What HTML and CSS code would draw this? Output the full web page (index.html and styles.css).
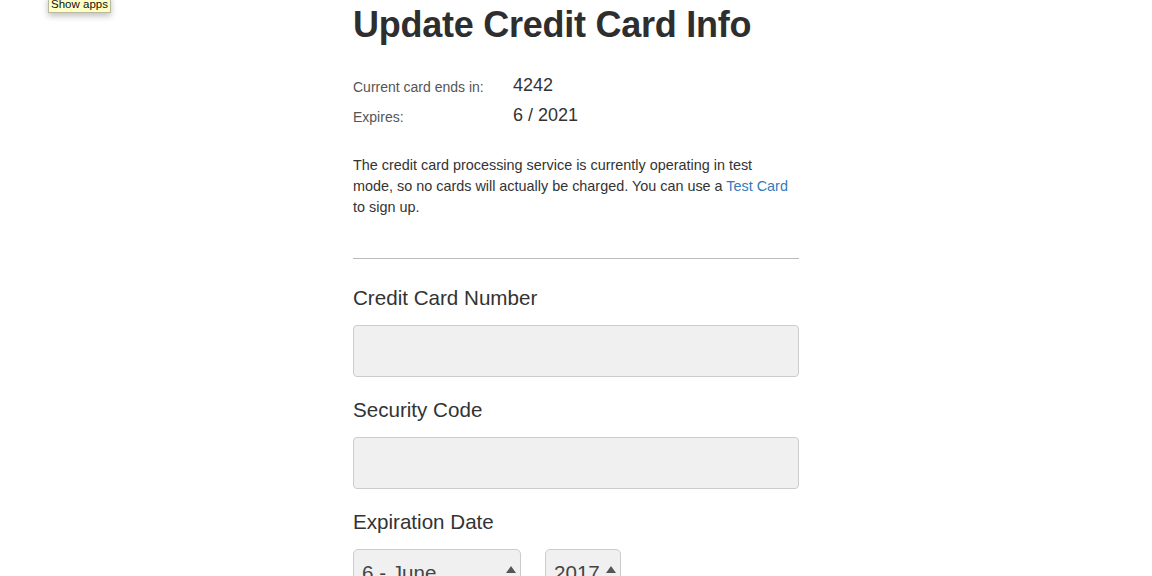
FILE: index.html
```html
<!DOCTYPE html>
<html>
<head>
<meta charset="utf-8">
<link rel="stylesheet" href="styles.css">
</head>
<body>
<div class="tooltip">Show apps</div>
<main class="container">
  <h1 class="title">Update Credit Card Info</h1>
  <div class="card-info">
    <div class="info-label">Current card ends in:</div>
    <div class="info-value">4242</div>
    <div class="info-label">Expires:</div>
    <div class="info-value">6 / 2021</div>
  </div>
  <p class="notice">The credit card processing service is currently operating in test mode, so no cards will actually be charged. You can use a <a href="#" class="link">Test Card</a> to sign up.</p>
  <hr class="divider">
  <form class="form">
    <div class="field">
      <label class="field-label">Credit Card Number</label>
      <input class="input" type="text">
    </div>
    <div class="field">
      <label class="field-label">Security Code</label>
      <input class="input" type="text">
    </div>
    <div class="field">
      <label class="field-label">Expiration Date</label>
      <div class="selects">
        <div class="select select-month"><span class="select-text">6 - June</span><span class="arrows"><span class="up"></span><span class="down"></span></span></div>
        <div class="select select-year"><span class="select-text">2017</span><span class="arrows"><span class="up"></span><span class="down"></span></span></div>
      </div>
    </div>
  </form>
</main>
</body>
</html>
```

FILE: styles.css
```css
html, body {
  margin: 0;
  padding: 0;
  background: #fff;
}
body {
  font-family: "Liberation Sans", Arial, sans-serif;
  color: #333;
  position: relative;
  height: 576px;
  overflow: hidden;
}
.tooltip {
  position: absolute;
  left: 48px;
  top: -4px;
  width: 63px;
  height: 17px;
  box-sizing: border-box;
  background: #ffffc6;
  border: 1px solid #b9b9a0;
  box-shadow: 0 3px 6px rgba(0,0,0,0.25);
  font-size: 11.5px;
  line-height: 15px;
  text-align: center;
  color: #111;
}
.container {
  width: 446px;
  margin: 0 auto;
  padding-top: 1px;
}
.title {
  font-size: 36px;
  font-weight: 700;
  line-height: 40px;
  margin: 4px 0 0 0;
  letter-spacing: -0.25px;
  color: #2e2e2e;
}
.card-info {
  display: grid;
  grid-template-columns: 160px auto;
  grid-auto-rows: 30px;
  margin-top: 25px;
  align-items: center;
}
.info-label {
  font-size: 14px;
  color: #555;
  padding-top: 3px;
}
.info-value {
  font-size: 18px;
  color: #333;
}
.notice {
  width: 440px;
  font-size: 14.4px;
  line-height: 21px;
  margin: 25px 0 0 0;
  color: #333;
}
.link {
  color: #337ab7;
  text-decoration: none;
}
.divider {
  border: 0;
  border-top: 1px solid #bbb;
  margin: 40px 0 0 0;
  height: 0;
}
.form {
  display: flex;
  flex-direction: column;
  gap: 21px;
  margin-top: 27px;
}
.field {
  display: flex;
  flex-direction: column;
  gap: 15px;
}
.field-label {
  font-size: 20.6px;
  line-height: 24px;
  color: #333;
}
.input {
  box-sizing: border-box;
  height: 52px;
  width: 100%;
  margin: 0;
  background: #f0f0f0;
  border: 1px solid #ccc;
  border-radius: 4px;
  font: inherit;
}
.selects {
  display: flex;
  gap: 24px;
}
.select {
  box-sizing: border-box;
  height: 52px;
  background: #f0f0f0;
  border: 1px solid #ccc;
  border-radius: 5px;
  display: flex;
  align-items: center;
  padding: 0 4px 0 8px;
  font-size: 20.6px;
  color: #444;
}
.select-month { width: 168px; }
.select-year { width: 76px; }
.select-text {
  flex: 1;
  white-space: nowrap;
  margin-bottom: 5px;
}
.arrows {
  display: flex;
  flex-direction: column;
  gap: 4px;
}
.up {
  width: 0;
  height: 0;
  border-left: 5px solid transparent;
  border-right: 5px solid transparent;
  border-bottom: 7px solid #555;
}
.down {
  width: 0;
  height: 0;
  border-left: 5px solid transparent;
  border-right: 5px solid transparent;
  border-top: 7px solid #555;
}
```
